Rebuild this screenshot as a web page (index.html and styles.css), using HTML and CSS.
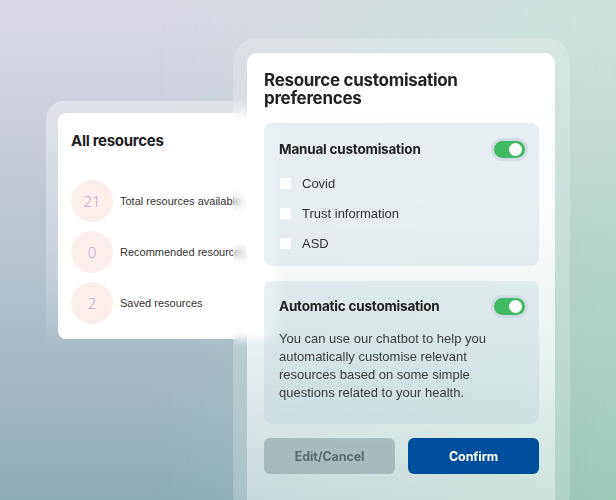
FILE: index.html
```html
<!DOCTYPE html>
<html lang="en">
<head>
<meta charset="utf-8">
<title>Resource customisation</title>
<link rel="stylesheet" href="styles.css">
</head>
<body>
<div class="stage">
  <div class="window window-left">
    <div class="card card-resources">
      <h2 class="card-title">All resources</h2>
      <ul class="stats">
        <li class="stat"><span class="stat-num">21</span><span class="stat-label">Total resources available</span></li>
        <li class="stat"><span class="stat-num">0</span><span class="stat-label">Recommended resources</span></li>
        <li class="stat"><span class="stat-num">2</span><span class="stat-label">Saved resources</span></li>
      </ul>
    </div>
  </div>

  <div class="window window-right">
    <div class="card card-prefs">
      <h1 class="prefs-title">Resource customisation preferences</h1>

      <section class="section">
        <div class="section-head">
          <h3 class="section-title">Manual customisation</h3>
          <span class="toggle"><span class="knob"></span></span>
        </div>
        <ul class="checks">
          <li class="check"><span class="box"></span>Covid</li>
          <li class="check"><span class="box"></span>Trust information</li>
          <li class="check"><span class="box"></span>ASD</li>
        </ul>
      </section>

      <section class="section section-auto">
        <div class="section-head">
          <h3 class="section-title">Automatic customisation</h3>
          <span class="toggle"><span class="knob"></span></span>
        </div>
        <p class="section-text">You can use our chatbot to help you automatically customise relevant resources based on some simple questions related to your health.</p>
      </section>

      <div class="actions">
        <button class="btn btn-secondary">Edit/Cancel</button>
        <button class="btn btn-primary">Confirm</button>
      </div>
    </div>
  </div>
</div>
</body>
</html>
```

FILE: styles.css
```css
* { box-sizing: border-box; }
html, body { margin: 0; padding: 0; }
body {
  width: 616px;
  height: 500px;
  overflow: hidden;
  font-family: "Liberation Sans", Arial, sans-serif;
  background: linear-gradient(180deg, #dadae5 0%, #b9c4ce 50%, #8dadb9 100%);
}
.stage {
  position: relative;
  width: 616px;
  height: 500px;
  overflow: hidden;
}
.stage::before {
  content: "";
  position: absolute;
  inset: 0;
  background: linear-gradient(180deg, #cfe2dd 0%, #b5d6cc 50%, #9ccbb8 100%);
  -webkit-mask-image: linear-gradient(90deg, transparent 25%, #000 100%);
  mask-image: linear-gradient(90deg, transparent 25%, #000 100%);
}

/* windows */
.window {
  position: absolute;
  border-radius: 22px;
}
.window-left {
  left: 46px;
  top: 101px;
  width: 230px;
  height: 252px;
  padding: 12px 0 0 12px;
  background: linear-gradient(180deg, rgba(255,255,255,0.38) 0%, rgba(255,255,255,0.22) 70%, rgba(255,255,255,0) 100%);
  border-radius: 18px;
}
.window-right {
  left: 233px;
  top: 38px;
  width: 337px;
  height: 480px;
  padding: 15px 15px 0 14px;
  background: rgba(255,255,255,0.22);
  -webkit-backdrop-filter: blur(4px);
  backdrop-filter: blur(4px);
  border-radius: 24px;
}

.card {
  border-radius: 9px;
}
.card-resources {
  background: #fff;
  height: 226px;
  padding: 18px 0 0 13px;
  border-radius: 8px;
}
.card-title {
  margin: 0;
  font-family: Inter, "Liberation Sans", sans-serif;
  font-weight: 700;
  font-size: 15px;
  line-height: 20px;
  letter-spacing: -0.3px;
  color: #1f1f1f;
}
.stats {
  list-style: none;
  margin: 29px 0 0;
  padding: 0;
  display: flex;
  flex-direction: column;
  gap: 9px;
}
.stat {
  display: flex;
  align-items: center;
  gap: 7px;
}
.stat-num {
  width: 42px;
  height: 42px;
  border-radius: 50%;
  background: #fbefec;
  color: #b7a0ce;
  font-family: "Open Sans", "Liberation Sans", sans-serif;
  font-weight: 300;
  font-size: 15px;
  display: flex;
  align-items: center;
  justify-content: center;
  flex: none;
}
.stat-label {
  font-size: 11px;
  color: #333;
  white-space: nowrap;
}

.card-prefs {
  height: 470px;
  padding: 18px 16px 0 17px;
  background: linear-gradient(180deg, #ffffff 0%, rgba(255,255,255,0.93) 35%, rgba(255,255,255,0.6) 70%, rgba(255,255,255,0.3) 100%);
  border-radius: 10px;
}
.prefs-title {
  margin: 0;
  font-family: Inter, "Liberation Sans", sans-serif;
  font-weight: 700;
  font-size: 17px;
  line-height: 18px;
  letter-spacing: -0.3px;
  color: #222;
  max-width: 230px;
}

.section {
  margin-top: 16px;
  background: rgba(165, 192, 204, 0.24);
  border-radius: 8px;
  padding: 15px 11px 8px 15px;
}
.section-auto {
  margin-top: 15px;
  padding: 14px 11px 22px 15px;
}
.section-head {
  display: flex;
  align-items: center;
  justify-content: space-between;
  height: 22px;
}
.section-title {
  margin: 0;
  font-family: Inter, "Liberation Sans", sans-serif;
  font-weight: 700;
  font-size: 13.5px;
  letter-spacing: -0.2px;
  color: #222;
}
.toggle {
  width: 37px;
  height: 23px;
  border-radius: 12px;
  background: rgba(200, 214, 224, 0.75);
  padding: 3px;
  display: flex;
}
.toggle .knob {
  position: relative;
  display: block;
  width: 31px;
  height: 17px;
  border-radius: 9px;
  background: #3eba63;
}
.toggle .knob::after {
  content: "";
  position: absolute;
  right: 3px;
  top: 2px;
  width: 13px;
  height: 13px;
  border-radius: 50%;
  background: #fff;
}

.checks {
  list-style: none;
  margin: 8px 0 0;
  padding: 0;
}
.check {
  height: 30px;
  display: flex;
  align-items: center;
  gap: 11px;
  font-size: 13px;
  color: #333;
  padding-left: 1px;
}
.box {
  width: 11px;
  height: 11px;
  background: #fff;
  border-radius: 1px;
  flex: none;
}

.section-text {
  margin: 13px 0 0;
  font-size: 13px;
  line-height: 18px;
  color: #3c3c3c;
  max-width: 235px;
}

.actions {
  margin-top: 14px;
  display: flex;
  gap: 13px;
}
.btn {
  flex: 1;
  height: 36px;
  border: 0;
  border-radius: 6px;
  font-family: Inter, "Liberation Sans", sans-serif;
  font-weight: 700;
  font-size: 12.5px;
  letter-spacing: -0.1px;
}
.btn-secondary {
  background: rgba(125, 148, 152, 0.5);
  color: #5b6a6d;
}
.btn-primary {
  background: #004f9c;
  color: #fff;
}
```
